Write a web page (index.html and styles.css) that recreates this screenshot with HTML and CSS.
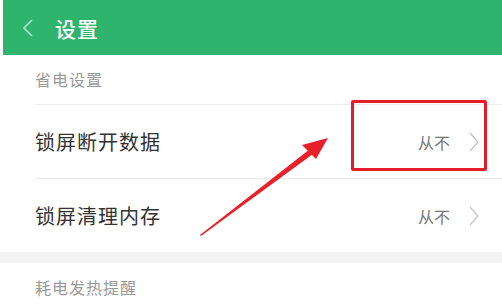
FILE: index.html
```html
<!DOCTYPE html>
<html lang="zh-CN">

<head>
  <meta charset="UTF-8">
  <meta name="viewport" content="width=device-width,initial-scale=1.0">
  <title>设置</title>
  <link rel="stylesheet" href="styles.css">
</head>

<body>
  <div class="screen">
    <header class="topbar">
      <svg class="back" width="14" height="20" viewBox="0 0 14 20">
        <path d="M11 2 L3 10 L11 18" fill="none" stroke="#b9e6cb" stroke-width="1.5"/>
      </svg>
      <h1>设置</h1>
    </header>

    <div class="section-title">省电设置</div>
    <div class="list">
      <div class="row">
        <span class="label">锁屏断开数据</span>
        <span class="value">从不</span>
        <svg class="chev" width="12" height="20" viewBox="0 0 12 20">
          <path d="M2 1 L10 10 L2 19" fill="none" stroke="#c4c4c4" stroke-width="1.3"/>
        </svg>
      </div>
      <div class="row">
        <span class="label">锁屏清理内存</span>
        <span class="value">从不</span>
        <svg class="chev" width="12" height="20" viewBox="0 0 12 20">
          <path d="M2 1 L10 10 L2 19" fill="none" stroke="#c4c4c4" stroke-width="1.3"/>
        </svg>
      </div>
    </div>

    <div class="band"></div>
    <div class="section-title">耗电发热提醒</div>

    <!-- annotation drawn over the screenshot -->
    <div class="mark-box"></div>
    <svg class="arrow" width="502" height="306" viewBox="0 0 502 306">
      <path d="M200 235 L310 149 L313 154 L201 236 Z" fill="#e8202a"/>
      <path d="M328 138 L302 145 L316 159 Z" fill="#e8202a"/>
    </svg>
  </div>
</body>

</html>
```

FILE: styles.css
```css
body{
  margin: 0;
  background: #fff;
  font-family: "Noto Sans CJK SC", "Noto Sans", sans-serif;
}
.screen{
  position: relative;
  width: 502px;
  height: 306px;
  overflow: hidden;
}
.topbar{
  display: flex;
  align-items: center;
  height: 55px;
  margin-left: 3px;
  background: #2fb46d;
  color: #fff;
}
.back{
  margin-left: 18px;
  margin-right: 20px;
}
.topbar h1{
  margin: 0;
  font-size: 21px;
  font-weight: 500;
  letter-spacing: 1px;
}
.section-title{
  height: 49px;
  line-height: 49px;
  padding-left: 35px;
  font-size: 16px;
  letter-spacing: 1px;
  color: #9a9a9a;
}
.list{
  padding-left: 35px;
}
.row{
  display: flex;
  align-items: center;
  height: 73px;
  border-top: 1px solid #ececec;
  padding-right: 22px;
}
.label{
  flex: 1;
  font-size: 20px;
  letter-spacing: 1px;
  color: #333;
}
.value{
  font-size: 16px;
  color: #777;
  margin-right: 18px;
}
.band{
  height: 11px;
  background: #f3f3f3;
}
.mark-box{
  position: absolute;
  left: 351px;
  top: 100px;
  width: 130px;
  height: 65px;
  border: 3.5px solid #e51d27;
  border-radius: 2px;
}
.arrow{
  position: absolute;
  left: 0;
  top: 0;
  pointer-events: none;
}
```
